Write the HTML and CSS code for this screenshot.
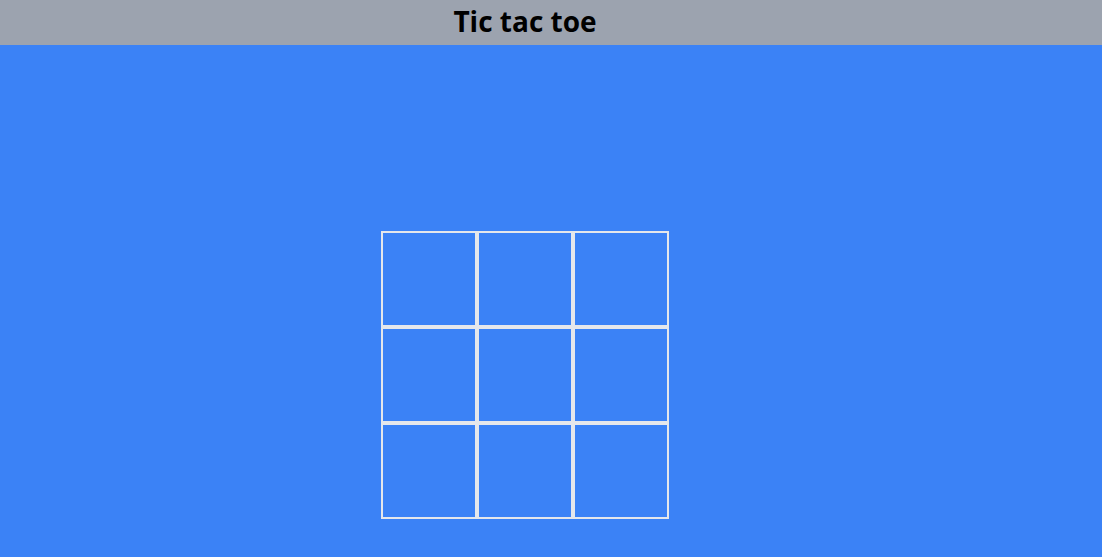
FILE: index.html
```html
<!DOCTYPE html>
<html>
<head>
<meta charset="utf-8">
<link rel="stylesheet" href="styles.css">
</head>
<body>
<header class="header">
  <div class="header-inner"><h1 class="title">Tic tac toe</h1></div>
</header>
<main class="main">
  <div class="board">
    <div class="cell"></div><div class="cell"></div><div class="cell"></div>
    <div class="cell"></div><div class="cell"></div><div class="cell"></div>
    <div class="cell"></div><div class="cell"></div><div class="cell"></div>
  </div>
</main>
</body>
</html>
```
FILE: styles.css
```css
html, body {
  margin: 0;
  padding: 0;
  height: 100%;
}
body {
  background: #3b82f6;
  font-family: "Open Sans", "Noto Sans", sans-serif;
}
.header {
  background: #9ca3af;
  height: 45px;
}
.header-inner {
  width: 1050px;
  text-align: center;
}
.title {
  margin: 0;
  font-size: 28px;
  font-weight: 700;
  line-height: 43px;
  color: #000;
}
.main {
  width: 1050px;
  display: flex;
  justify-content: center;
  padding-top: 186px;
}
.board {
  display: grid;
  grid-template-columns: repeat(3, 96px);
  grid-template-rows: repeat(3, 96px);
}
.cell {
  box-sizing: border-box;
  border: 2px solid #e5e7eb;
}
```
